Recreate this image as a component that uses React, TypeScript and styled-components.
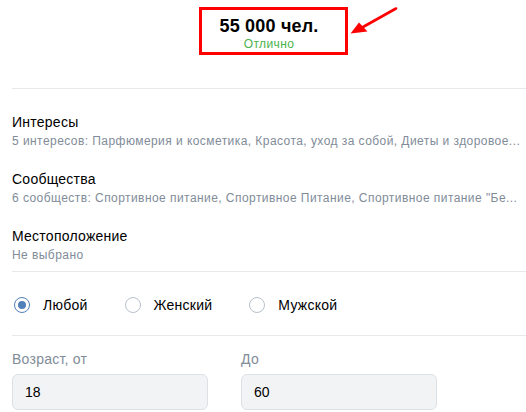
import { createGlobalStyle } from 'styled-components'
import styled from 'styled-components'

const GlobalStyle = createGlobalStyle`
  body {
    margin: 0;
    background: #fff;
    font-family: "Liberation Sans", Arial, sans-serif;
    color: #000;
    overflow: hidden;
  }
`

const Page = styled.div`
  width: 526px;
  padding-left: 12px;
  box-sizing: border-box;
  letter-spacing: 0.25px;
`

const Header = styled.div`
  display: flex;
  justify-content: center;
  padding-top: 15px;
  padding-bottom: 37px;
  border-bottom: 1px solid #e7e8ec;
`

const Stat = styled.div`
  position: relative;
  display: flex;
  flex-direction: column;
  align-items: center;
`

const StatValue = styled.div`
  font-size: 18px;
  line-height: 22px;
  font-weight: bold;
  letter-spacing: 0.2px;
`

const StatNote = styled.div`
  font-size: 12px;
  line-height: 14px;
  color: #4bb34b;
  letter-spacing: 0.4px;
`

const Highlight = styled.div`
  position: absolute;
  left: -20px;
  right: -29px;
  top: -8px;
  bottom: -4px;
  border: 3px solid #ff0000;
  pointer-events: none;
`

const Arrow = styled.svg`
  position: absolute;
  left: 100%;
  margin-left: 28px;
  top: -10px;
  width: 54px;
  height: 32px;
  overflow: visible;
`

const Filters = styled.div`
  display: flex;
  flex-direction: column;
  gap: 21px;
  padding: 24px 2px 8px 0;
  border-bottom: 1px solid #e7e8ec;
`

const Filter = styled.div`
  display: flex;
  flex-direction: column;
  gap: 2px;
  min-width: 0;
`

const FilterTitle = styled.div`
  font-size: 14px;
  line-height: 18px;
`

const FilterValue = styled.div`
  font-size: 12px;
  line-height: 16px;
  letter-spacing: 0.44px;
  color: #818c99;
  white-space: nowrap;
  overflow: hidden;
  text-overflow: ellipsis;
`

const RadioRow = styled.div`
  display: flex;
  align-items: center;
  gap: 37px;
  padding: 24px 0 21px 2px;
  border-bottom: 1px solid #e7e8ec;
`

const RadioLabel = styled.label`
  display: flex;
  align-items: center;
  gap: 13px;
  font-size: 14px;
  line-height: 18px;
  cursor: pointer;
`

const RadioCircle = styled.span<{ $checked?: boolean }>`
  box-sizing: border-box;
  width: 16px;
  height: 16px;
  border-radius: 50%;
  border: 1px solid ${p => (p.$checked ? '#5181b8' : '#b8c1cc')};
  display: flex;
  align-items: center;
  justify-content: center;
  &::after {
    content: '';
    width: 8px;
    height: 8px;
    border-radius: 50%;
    background: ${p => (p.$checked ? '#5181b8' : 'transparent')};
  }
`

const AgeGrid = styled.div`
  display: grid;
  grid-template-columns: 196px 196px;
  column-gap: 33px;
  padding-top: 14px;
`

const Field = styled.div`
  display: flex;
  flex-direction: column;
  gap: 6px;
`

const FieldLabel = styled.div`
  font-size: 14px;
  line-height: 18px;
  color: #818c99;
`

const Input = styled.input`
  box-sizing: border-box;
  width: 100%;
  height: 36px;
  padding: 0 12px;
  border: 1px solid #dce1e6;
  border-radius: 6px;
  background: #f2f3f5;
  font-family: inherit;
  font-size: 14px;
  color: #000;
  outline: none;
`

const filters = [
  { title: 'Интересы', value: '5 интересов: Парфюмерия и косметика, Красота, уход за собой, Диеты и здоровое...' },
  { title: 'Сообщества', value: '6 сообществ: Спортивное питание, Спортивное Питание, Спортивное питание "Бе...' },
  { title: 'Местоположение', value: 'Не выбрано' },
]

const genders = ['Любой', 'Женский', 'Мужской']

export default function App() {
  return (
    <Page>
      <GlobalStyle />
      <Header>
        <Stat>
          <StatValue>55 000 чел.</StatValue>
          <StatNote>Отлично</StatNote>
          <Highlight />
          <Arrow viewBox="0 0 54 32">
            <line x1="16" y1="22" x2="49" y2="3.5" stroke="#ff0000" strokeWidth="2.6" strokeLinecap="round" />
            <polygon points="3.5,28.5 12,17.5 20.5,26.5" fill="#ff0000" />
          </Arrow>
        </Stat>
      </Header>
      <Filters>
        {filters.map(f => (
          <Filter key={f.title}>
            <FilterTitle>{f.title}</FilterTitle>
            <FilterValue>{f.value}</FilterValue>
          </Filter>
        ))}
      </Filters>
      <RadioRow>
        {genders.map((g, i) => (
          <RadioLabel key={g}>
            <RadioCircle $checked={i === 0} />
            {g}
          </RadioLabel>
        ))}
      </RadioRow>
      <AgeGrid>
        <Field>
          <FieldLabel>Возраст, от</FieldLabel>
          <Input defaultValue="18" />
        </Field>
        <Field>
          <FieldLabel>До</FieldLabel>
          <Input defaultValue="60" />
        </Field>
      </AgeGrid>
    </Page>
  )
}
